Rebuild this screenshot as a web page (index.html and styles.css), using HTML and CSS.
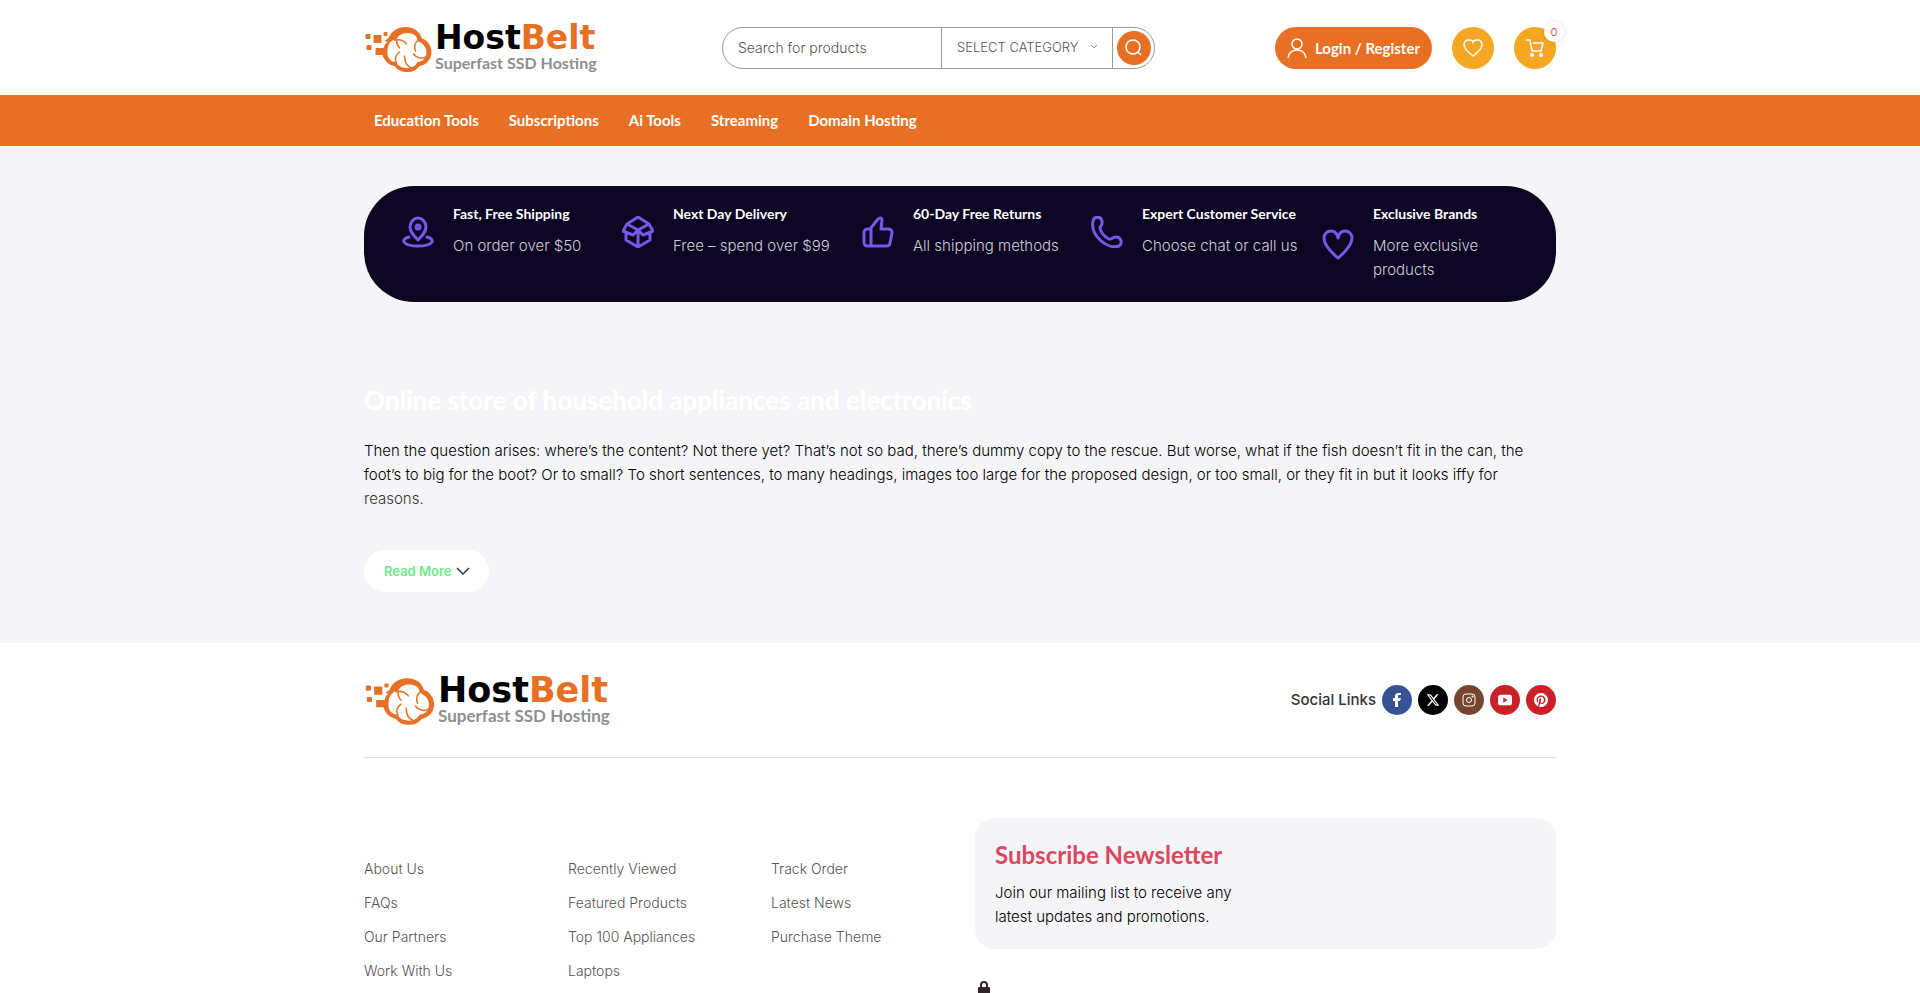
FILE: index.html
```html
<!DOCTYPE html>
<html lang="en">
<head>
<meta charset="utf-8">
<meta name="viewport" content="width=device-width, initial-scale=1">
<title>HostBelt</title>
<link rel="stylesheet" href="styles.css">
</head>
<body>
<svg class="defs" aria-hidden="true">
  <symbol id="logo" viewBox="0 0 70 56">
    <g fill="#e87024">
      <rect x="1" y="14" width="5" height="5" rx="1"/><rect x="9" y="15" width="8" height="8" rx="1"/>
      <rect x="19" y="12" width="4" height="4" rx="1"/><rect x="2" y="25" width="5" height="5" rx="1"/>
      <path d="M12 28h7c1-3 2-5 4-6l-3-1 4-3C27 11 33 7 41 7c8 0 14 4 16 11 6 2 10 8 10 14 0 7-5 13-12 14-3 4-7 6-12 6-6 0-10-2-13-6-6-1-10-5-12-11h-6c-1 0-1 0-1-1v-5c0-1 0-1 1-1z"/>
    </g>
    <path fill="#fff" d="M24 25c2-4 5-6 8-5 1-4 5-7 11-7 7 0 10 4 10 8 5 2 9 6 9 11 0 6-4 10-9 10-2 4-6 6-10 6-5 0-10-2-11-6-5 0-9-3-9-9 0-3 0-6 1-8z"/>
    <g fill="none" stroke="#e87024" stroke-width="1.500" stroke-linecap="round">
      <path d="M30 20c5-1 9 0 12 4"/><path d="M32 20c0 4 1 6 3 8"/>
      <path d="M54 20c-4 3-5 6-3 11"/>
      <path d="M61 37c-4 2-9 1-12-3"/>
      <path d="M47 48c-5-2-7-6-7-12"/>
      <path d="M32 43c-2-4-1-8 3-11"/>
    </g>
  </symbol>
</svg>

<header>
  <div class="wrap top">
    <a href="#" class="logo" aria-label="HostBelt">
      <svg><use href="#logo"/></svg>
      <span><strong>Host<b>Belt</b></strong><small>Superfast SSD Hosting</small></span>
    </a>
    <form class="search">
      <input type="search" placeholder="Search for products" aria-label="Search for products">
      <div class="category">
        <select aria-label="Category"><option>SELECT CATEGORY</option></select>
        <svg class="chev" viewBox="0 0 8 6"><path d="M1 1l3 3 3-3"/></svg>
      </div>
      <button type="button" aria-label="Search"><svg viewBox="0 0 18 18"><circle cx="8" cy="8" r="7"/><path d="M13 13l3 3"/></svg></button>
    </form>
    <div class="tools">
      <a href="#" class="login"><svg viewBox="0 0 20 20"><circle cx="10" cy="6" r="5"/><path d="M1 20c1-6 4-8 9-8s8 2 9 8"/></svg>Login / Register</a>
      <a href="#" class="round" aria-label="Wishlist"><svg viewBox="0 0 20 20"><path d="M10 18C6 15 1 11 1 7c0-3 2-5 5-5 2 0 4 1 4 3 0-2 2-3 4-3 3 0 5 2 5 5 0 4-5 8-9 11z"/></svg></a>
      <a href="#" class="round" aria-label="Cart"><svg viewBox="0 0 20 20"><path d="M1 2h4l2 11h9l2-8H8"/><g fill="#fff" stroke="none"><circle cx="7" cy="17" r="2"/><circle cx="16" cy="17" r="2"/></g></svg><span class="badge">0</span></a>
    </div>
  </div>
  <nav>
    <div class="wrap links">
      <a href="#">Education Tools</a><a href="#">Subscriptions</a><a href="#">Ai Tools</a><a href="#">Streaming</a><a href="#">Domain Hosting</a>
    </div>
  </nav>
</header>

<main>
  <div class="wrap">
    <section class="features">
      <div class="feature">
        <svg viewBox="0 0 32 32"><path d="M16 24c-4-4-8-8-8-13a8 9 0 0 1 16 0c0 5-4 9-8 13z"/><circle cx="16" cy="11" r="2"/><path d="M7 21c-4 1-6 3-5 5 2 3 8 4 14 4s12-1 14-4c1-2-1-4-5-5"/></svg>
        <div><h3>Fast, Free Shipping</h3><p>On order over $50</p></div>
      </div>
      <div class="feature">
        <svg viewBox="0 0 32 32"><path d="M16 1l11 7 4 7-10 4-5-5-5 5-10-4 4-7zM5 8l11 6 11-6M4 17v7l12 7 12-7v-7M16 14v17"/></svg>
        <div><h3>Next Day Delivery</h3><p>Free – spend over $99</p></div>
      </div>
      <div class="feature">
        <svg viewBox="0 0 32 32"><path d="M8 13l8-10c2-2 4-1 4 1l-1 9h7c3 0 4 1 4 4l-2 10c0 2-2 3-4 3H6c-3 0-4-1-4-4V17c0-3 1-4 4-4zM9 13v17"/></svg>
        <div><h3>60-Day Free Returns</h3><p>All shipping methods</p></div>
      </div>
      <div class="feature">
        <svg viewBox="0 0 32 32"><path d="M2 5c1-5 8-5 9 0 1 4-2 5-2 7 1 5 5 9 9 11 2 1 4-2 7-2 5 0 7 6 3 9C17 34-1 20 2 5z"/></svg>
        <div><h3>Expert Customer Service</h3><p>Choose chat or call us</p></div>
      </div>
      <div class="feature">
        <svg viewBox="0 0 32 32"><path d="M16 30C10 25 2 18 2 10c0-4 3-7 7-7 3 0 6 2 7 7 1-5 4-7 7-7 4 0 7 3 7 7 0 8-8 15-14 20z"/></svg>
        <div><h3>Exclusive Brands</h3><p>More exclusive products</p></div>
      </div>
    </section>
    <section class="about">
      <h2>Online store of household appliances and electronics</h2>
      <p>Then the question arises: where’s the content? Not there yet? That’s not so bad, there’s dummy copy to the rescue. But worse, what if the fish doesn’t fit in the can, the foot’s to big for the boot? Or to small? To short sentences, to many headings, images too large for the proposed design, or too small, or they fit in but it looks iffy for <span>reasons.</span></p>
      <button type="button">Read More<svg viewBox="0 0 14 9"><path d="M1 1l6 6 6-6"/></svg></button>
    </section>
  </div>
</main>

<footer class="wrap">
  <div class="brand">
    <a href="#" class="logo large" aria-label="HostBelt">
      <svg><use href="#logo"/></svg>
      <span><strong>Host<b>Belt</b></strong><small>Superfast SSD Hosting</small></span>
    </a>
    <div class="social">
      <span>Social Links</span>
      <a href="#" class="fb" aria-label="Facebook"><svg viewBox="0 0 14 14"><path d="M8 14V8h2l1-3H8V4c0-1 0-2 1-2h2V0H9C6 0 5 1 5 4v1H3v3h2v6z"/></svg></a>
      <a href="#" class="x" aria-label="X"><svg viewBox="0 0 24 24"><path d="M18.244 2.25h3.308l-7.227 8.26 8.502 11.24H16.17l-5.214-6.817L4.99 21.75H1.68l7.73-8.835L1.254 2.25H8.08l4.713 6.231zm-1.161 17.52h1.833L7.084 4.126H5.117z"/></svg></a>
      <a href="#" class="ig" aria-label="Instagram"><svg viewBox="0 0 14 14"><g fill="none" stroke="#fff"><rect x="1" y="1" width="12" height="12" rx="3"/><circle cx="7" cy="7" r="2.500"/></g><circle cx="10.500" cy="3.500" r="1"/></svg></a>
      <a href="#" class="red" aria-label="YouTube"><svg viewBox="0 0 16 12"><path fill-rule="evenodd" d="M3 0h10c2 0 3 1 3 3v6c0 2-1 3-3 3H3c-2 0-3-1-3-3V3c0-2 1-3 3-3zm3 3v6l5-3z"/></svg></a>
      <a href="#" class="red" aria-label="Pinterest"><svg viewBox="0 0 24 24"><path d="M12 0C5.373 0 0 5.372 0 12c0 5.084 3.163 9.426 7.627 11.174-.105-.949-.2-2.405.042-3.441.218-.937 1.407-5.965 1.407-5.965s-.359-.719-.359-1.782c0-1.668.967-2.914 2.171-2.914 1.023 0 1.518.769 1.518 1.69 0 1.029-.655 2.568-.994 3.995-.283 1.194.599 2.169 1.777 2.169 2.133 0 3.772-2.249 3.772-5.495 0-2.873-2.064-4.882-5.012-4.882-3.414 0-5.418 2.561-5.418 5.207 0 1.031.397 2.138.893 2.738a.36.36 0 0 1 .083.345l-.333 1.36c-.053.22-.174.267-.402.161-1.499-.698-2.436-2.889-2.436-4.649 0-3.785 2.75-7.262 7.929-7.262 4.163 0 7.398 2.967 7.398 6.931 0 4.136-2.607 7.464-6.227 7.464-1.216 0-2.359-.631-2.75-1.378l-.748 2.853c-.271 1.043-1.002 2.35-1.492 3.146A12 12 0 1 0 12 0z"/></svg></a>
    </div>
  </div>
  <div class="columns">
    <ul><li><a href="#">About Us</a></li><li><a href="#">FAQs</a></li><li><a href="#">Our Partners</a></li><li><a href="#">Work With Us</a></li></ul>
    <ul><li><a href="#">Recently Viewed</a></li><li><a href="#">Featured Products</a></li><li><a href="#">Top 100 Appliances</a></li><li><a href="#">Laptops</a></li></ul>
    <ul><li><a href="#">Track Order</a></li><li><a href="#">Latest News</a></li><li><a href="#">Purchase Theme</a></li></ul>
    <div>
      <section class="newsletter">
        <h2>Subscribe Newsletter</h2>
        <p>Join our mailing list to receive any latest updates and promotions.</p>
      </section>
      <svg class="lock" viewBox="0 0 18 18"><path d="M6 8V5a3 3 0 0 1 6 0v3" fill="none" stroke="#33262b" stroke-width="2"/><rect x="3" y="7" width="12" height="10" rx="1" fill="#33262b"/></svg>
    </div>
  </div>
</footer>
</body>
</html>
```
FILE: styles.css
```css
* { box-sizing: border-box; margin: 0; padding: 0; }
body { height: 100vh; overflow: hidden; background: #fff; color: #000; font: 300 15px/24px Inter, sans-serif; }
a { color: inherit; text-decoration: none; }
svg { display: block; flex: none; }
button, input, select { font: inherit; border: 0; background: none; }
.defs { position: absolute; width: 0; height: 0; }
.wrap { width: 100%; max-width: 1192px; margin: 0 auto; }

.logo { display: flex; align-items: center; width: 237px; white-space: nowrap; }
.logo svg { width: 71px; height: 56px; }
.logo strong { display: block; color: #000; font: 700 33px/30px "DejaVu Sans", sans-serif; }
.logo b { color: #e87024; }
.logo small { display: block; color: #8f8f8f; font: 700 16px/20px Lato, sans-serif; }
.logo.large { width: 248px; }
.logo.large svg { width: 74px; height: 58px; }
.logo.large strong { font-size: 35px; line-height: 32px; }
.logo.large small { font-size: 17px; }

.top { display: flex; align-items: center; height: 95px; }
.search { display: flex; align-items: center; width: 433px; height: 42px; margin-left: 121px; border: 1px solid #999; border-radius: 21px; }
.search input { flex: 1; min-width: 0; height: 40px; padding-left: 15px; font-size: 14px; outline: 0; }
.search input::placeholder { color: #555; opacity: 1; }
.category { display: flex; align-items: center; gap: 8px; width: 172px; height: 40px; padding: 0 14px 2px 15px; border: solid #999; border-width: 0 1px; }
.category select { flex: 1; appearance: none; color: #555; font-size: 13px; }
.chev { width: 8px; height: 6px; fill: none; stroke: #999; }
.search button { display: grid; place-items: center; width: 34px; height: 34px; margin: 0 3px 0 4px; border-radius: 50%; background: #e87024; }
.search button svg { width: 18px; height: 18px; fill: none; stroke: #fff; stroke-width: 1.5; }
.tools { display: flex; gap: 20px; margin-left: auto; }
.login { display: flex; align-items: center; gap: 8px; height: 42px; padding: 0 12px; border-radius: 21px; background: #e87024; color: #fff; font: 700 15px/24px Lato, sans-serif; }
.login svg { width: 20px; height: 20px; fill: none; stroke: #fff; stroke-width: 1.5; }
.round { position: relative; display: grid; place-items: center; width: 42px; height: 42px; border-radius: 50%; background: #f5a623; }
.round svg { width: 20px; height: 20px; fill: none; stroke: #fff; stroke-width: 1.5; stroke-linejoin: round; }
.badge { position: absolute; top: -5px; right: -8px; width: 20px; height: 20px; border-radius: 50%; background: #fff; box-shadow: 0 0 4px #0002; color: #d0623c; font-size: 11px; font-weight: 400; line-height: 20px; text-align: center; }

nav { background: #e87024; }
.links { display: flex; gap: 30px; padding: 13px 10px 14px; color: #fff; font: 700 15px/24px Lato, sans-serif; }

main { height: 497px; padding-top: 40px; background: #f5f5f7; }
.features { display: grid; grid-template-columns: 220fr 240fr 229fr 231fr 196fr; padding: 16px 38px; border-radius: 50px; background: #0d0524; }
.feature { display: flex; align-items: center; align-self: start; gap: 19px; }
.feature svg { width: 32px; height: 32px; fill: none; stroke: #7359e6; stroke-width: 3; stroke-linejoin: round; stroke-linecap: round; }
.feature h3 { margin-bottom: 8px; color: #fff; font: 700 14px/24px Lato, sans-serif; }
.feature p { padding-bottom: 4px; color: #d0cdd8; }
.about { padding-top: 81px; }
.about h2 { margin-bottom: 22px; color: #fff; font: 700 26px/34px Lato, sans-serif; }
.about p span { color: #333; }
.about button { display: flex; align-items: center; gap: 5px; height: 42px; margin-top: 39px; padding: 0 19px 0 20px; border-radius: 21px; background: #fff; color: #6fe98a; font-size: 13px; font-weight: 600; }
.about button svg { width: 14px; height: 9px; fill: none; stroke: #333; stroke-width: 1.5; }

.brand { display: flex; align-items: center; justify-content: space-between; height: 115px; border-bottom: 1px solid #e1e1e1; }
.social { display: flex; align-items: center; gap: 6px; color: #333; font-weight: 500; }
.social a { display: grid; place-items: center; width: 30px; height: 30px; border-radius: 50%; fill: #fff; }
.social svg { width: 14px; height: 14px; }
.fb { background: #365493; }
.x { background: #000; }
.ig { background: #774430; }
.red { background: #cb2027; }
.columns { display: grid; grid-template-columns: 204fr 203fr 204fr 581fr; padding-top: 60px; }
.columns ul { padding-top: 39px; list-style: none; color: #555; font-size: 14px; }
.columns li { margin-bottom: 10px; }
.newsletter { padding: 20px; border-radius: 20px; background: #f5f5f7; }
.newsletter h2 { margin-bottom: 9px; color: #d9485f; font: 700 24px/34px Lato, sans-serif; }
.newsletter p { max-width: 250px; }
.lock { width: 18px; height: 18px; margin-top: 31px; }
```
